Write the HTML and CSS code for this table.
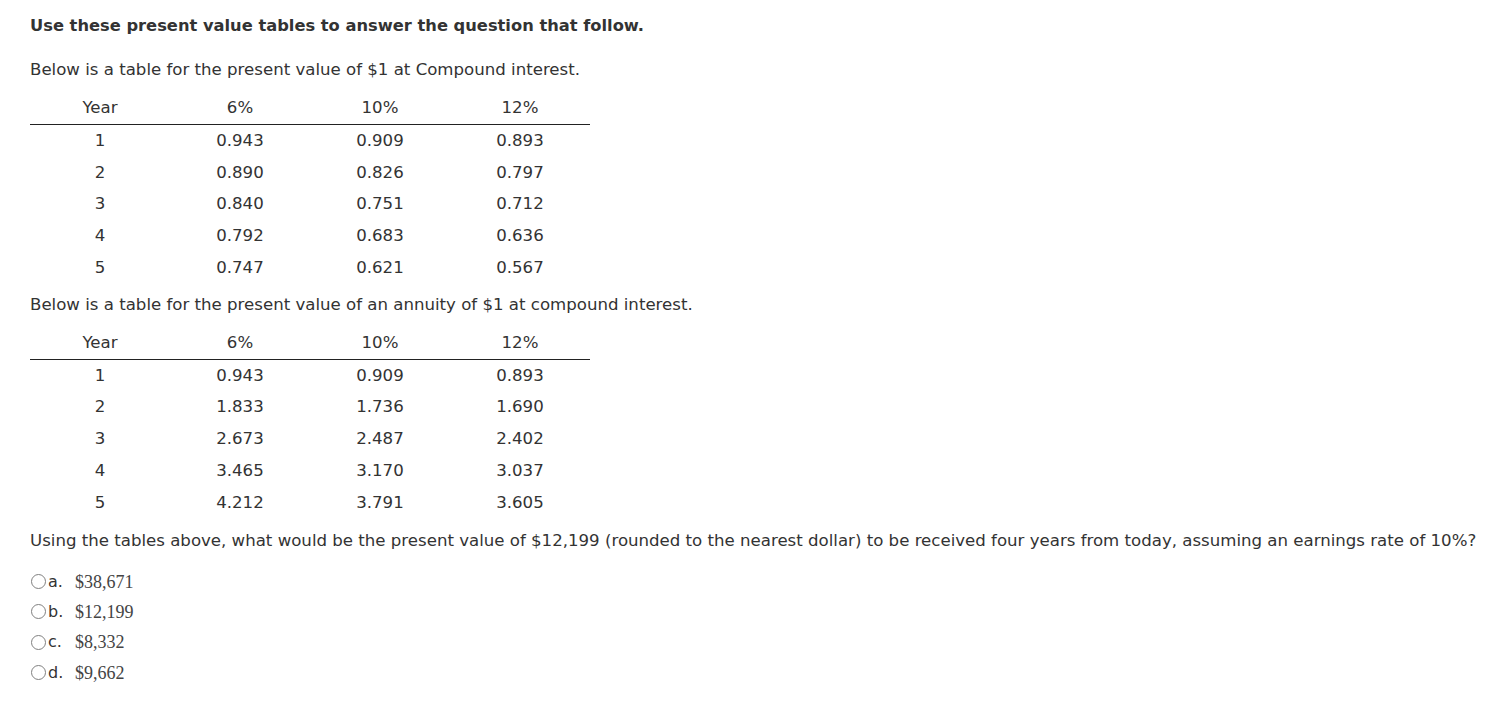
FILE: index.html
```html
<!DOCTYPE html>
<html>
<head>
<meta charset="utf-8">
<link rel="stylesheet" href="styles.css">
</head>
<body>
<div class="page">
  <p class="title">Use these present value tables to answer the question that follow.</p>
  <p class="intro first">Below is a table for the present value of $1 at Compound interest.</p>
  <table class="pv">
    <thead><tr><th>Year</th><th>6%</th><th>10%</th><th>12%</th></tr></thead>
    <tbody>
      <tr><td>1</td><td>0.943</td><td>0.909</td><td>0.893</td></tr>
      <tr><td>2</td><td>0.890</td><td>0.826</td><td>0.797</td></tr>
      <tr><td>3</td><td>0.840</td><td>0.751</td><td>0.712</td></tr>
      <tr><td>4</td><td>0.792</td><td>0.683</td><td>0.636</td></tr>
      <tr><td>5</td><td>0.747</td><td>0.621</td><td>0.567</td></tr>
    </tbody>
  </table>
  <p class="intro">Below is a table for the present value of an annuity of $1 at compound interest.</p>
  <table class="pv">
    <thead><tr><th>Year</th><th>6%</th><th>10%</th><th>12%</th></tr></thead>
    <tbody>
      <tr><td>1</td><td>0.943</td><td>0.909</td><td>0.893</td></tr>
      <tr><td>2</td><td>1.833</td><td>1.736</td><td>1.690</td></tr>
      <tr><td>3</td><td>2.673</td><td>2.487</td><td>2.402</td></tr>
      <tr><td>4</td><td>3.465</td><td>3.170</td><td>3.037</td></tr>
      <tr><td>5</td><td>4.212</td><td>3.791</td><td>3.605</td></tr>
    </tbody>
  </table>
  <p class="question">Using the tables above, what would be the present value of $12,199 (rounded to the nearest dollar) to be received four years from today, assuming an earnings rate of 10%?</p>
  <div class="options">
    <label class="option"><span class="radio"></span><span class="letter">a.</span><span class="amount">$38,671</span></label>
    <label class="option"><span class="radio"></span><span class="letter">b.</span><span class="amount">$12,199</span></label>
    <label class="option"><span class="radio"></span><span class="letter">c.</span><span class="amount">$8,332</span></label>
    <label class="option"><span class="radio"></span><span class="letter">d.</span><span class="amount">$9,662</span></label>
  </div>
</div>
</body>
</html>
```
FILE: styles.css
```css
html, body {
  margin: 0;
  padding: 0;
  background: #fff;
}
.page {
  padding: 16px 0 0 30px;
  font-family: "DejaVu Sans", Verdana, sans-serif;
  font-size: 16.6px;
  line-height: 20px;
  color: #333;
}
p {
  margin: 0;
}
.title {
  font-weight: bold;
  font-size: 16.3px;
}
.intro {
  margin-top: 11px;
}
.intro.first {
  margin-top: 24px;
}
.pv {
  border-collapse: collapse;
  width: 560px;
  margin-top: 12px;
  table-layout: fixed;
}
.pv th, .pv td {
  width: 140px;
  padding: 0;
  height: 31.75px;
  text-align: center;
  font-weight: normal;
  vertical-align: middle;
}
.pv th {
  height: 32px;
  border-bottom: 1px solid #222;
}
.question {
  margin-top: 12px;
}
.options {
  margin-top: 16px;
  display: flex;
  flex-direction: column;
}
.option {
  display: flex;
  align-items: center;
  height: 30.3px;
}
.radio {
  width: 13px;
  height: 13px;
  border: 1.5px solid #808080;
  border-radius: 50%;
  margin-left: 1px;
  margin-right: 2px;
  flex: none;
}
.letter {
  font-size: 16px;
  width: 27px;
}
.amount {
  font-family: "Liberation Serif", "Times New Roman", serif;
  font-size: 18px;
  color: #444;
}
```
